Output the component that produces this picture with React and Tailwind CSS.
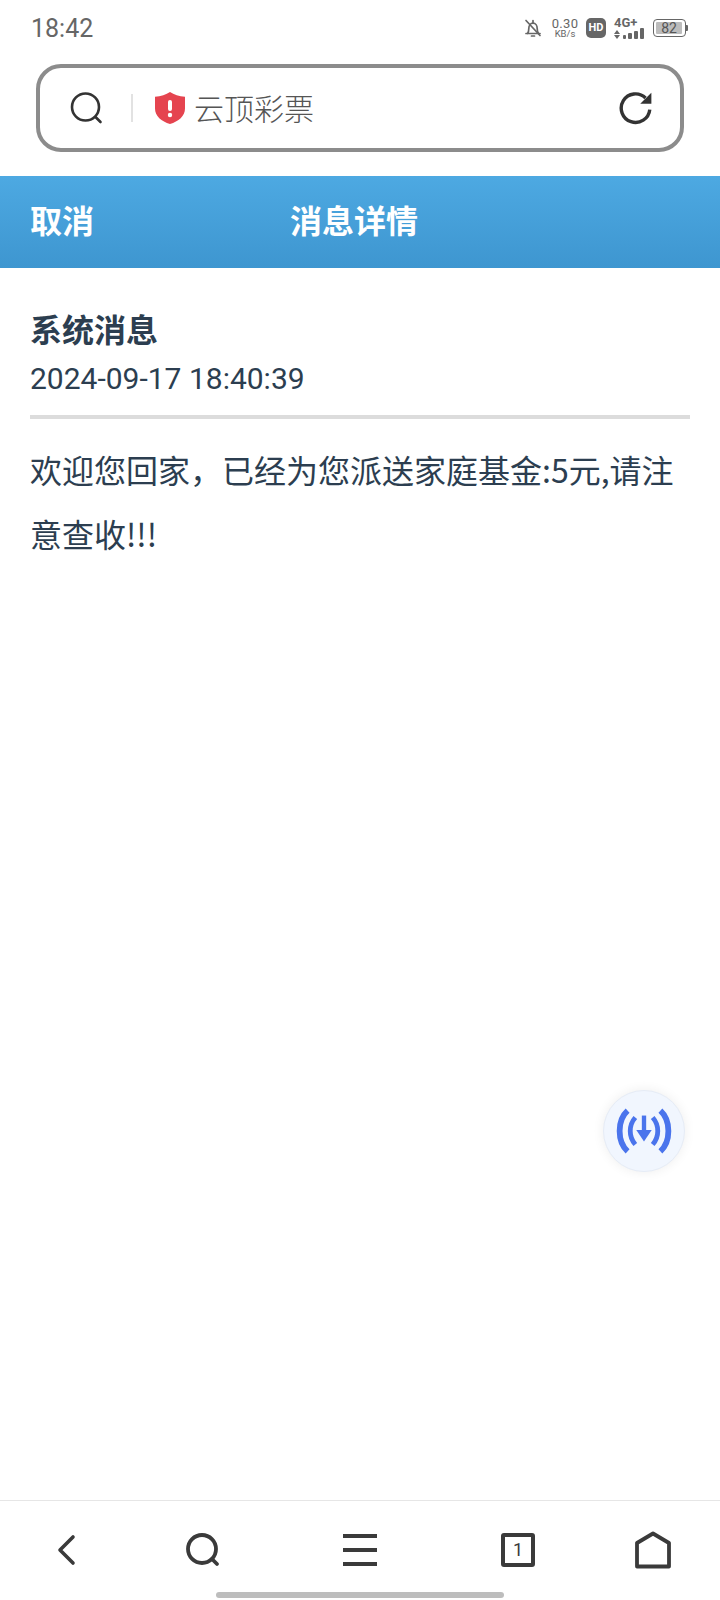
const cjk = { fontFamily: '"Noto Sans CJK SC", Roboto, sans-serif' };

function BellOff() {
  return (
    <svg width="20" height="20" viewBox="0 0 20 20" fill="none" stroke="#666" strokeWidth="1.7" strokeLinecap="round">
      <path d="M3 15.500h14M4.500 15.500c1.200-1.400 1.300-3 1.300-5 0-3 1.700-5.300 4.200-5.300 2.500 0 4.200 2.300 4.200 5.300 0 2 .1 3.600 1.300 5" />
      <path d="M10 2.500v2M8.500 18h3M3 2.500l14 15" />
    </svg>
  );
}

function Signal() {
  return (
    <div className="flex items-end gap-[2px]">
      <div className="flex flex-col gap-[1px] mr-[1px]">
        <div className="w-0 h-0 border-x-[3px] border-x-transparent border-b-[4px] border-b-[#666]" />
        <div className="w-0 h-0 border-x-[3px] border-x-transparent border-t-[4px] border-t-[#666]" />
      </div>
      <div className="w-[3px] h-[4px] rounded-[1px] bg-[#666]" />
      <div className="w-[4px] h-[6px] rounded-[1px] bg-[#666]" />
      <div className="w-[4px] h-[8px] rounded-[1px] bg-[#666]" />
      <div className="w-[4px] h-[11px] rounded-[1px] bg-[#666]" />
    </div>
  );
}

function StatusBar() {
  return (
    <div className="h-[56px] flex items-center justify-between pl-[31px] pr-[32px] text-[#666]" style={{ fontFamily: 'Roboto, sans-serif' }}>
      <span className="text-[25px] leading-none">18:42</span>
      <div className="flex items-center">
        <BellOff />
        <div className="flex flex-col items-center ml-[9px] w-[26px] leading-none">
          <span className="text-[13px] leading-[11px] tracking-[0.3px]">0.30</span>
          <span className="text-[9.500px] leading-[9px]">KB/s</span>
        </div>
        <div className="ml-[8px] w-[20px] h-[20px] rounded-[5px] bg-[#666] text-white text-[11px] font-bold flex items-center justify-center">HD</div>
        <div className="ml-[8px] flex flex-col items-start w-[32px]">
          <span className="text-[13px] font-bold leading-[10px]">4G+</span>
          <Signal />
        </div>
        <div className="ml-[7px] flex items-center">
          <div className="w-[33px] h-[18px] rounded-[4px] border-[1.500px] border-[#666] p-[2px] flex">
            <div className="w-[26px] h-full rounded-[1px] bg-[#bcbcbc] flex items-center justify-center text-[14px] text-[#555] leading-none">82</div>
          </div>
          <div className="w-[2px] h-[6px] bg-[#666] rounded-r-[1px]" />
        </div>
      </div>
    </div>
  );
}

function SearchField() {
  return (
    <div className="mx-[36px] mt-[8px] mb-[24px] h-[88px] rounded-[25px] border-[4px] border-[#8c8c8c] flex items-center pl-[30px] pr-[26px]">
      <svg width="33" height="32" viewBox="0 0 33 32" fill="none" stroke="#333" strokeWidth="2.600" strokeLinecap="round">
        <circle cx="15.500" cy="15" r="13.500" />
        <path d="M25.500 25l5 5" />
      </svg>
      <div className="ml-[28px] w-[2px] h-[28px] bg-[#e2e2e2]" />
      <svg className="ml-[21px]" width="32" height="34" viewBox="0 0 32 34">
        <path d="M16 1c4 2.800 9 4.200 15 4.800v11.700c0 7.500-6.500 13-15 15.500C7.500 30.500 1 25 1 17.500V5.800C7 5.200 12 3.800 16 1z" fill="#e5444f" />
        <rect x="14" y="9" width="4" height="11" rx="2" fill="#fff" />
        <circle cx="16" cy="24" r="2.200" fill="#fff" />
      </svg>
      <span className="ml-[8px] text-[30px] leading-none text-[#555] pb-[2px]" style={{ ...cjk, fontWeight: 300 }}>云顶彩票</span>
      <svg className="ml-auto" width="36" height="36" viewBox="0 0 34 34" fill="none">
        <path d="M30 18.500a13.500 13.500 0 1 1-4-11" stroke="#333" strokeWidth="3.200" strokeLinecap="butt" />
        <path d="M31.500 2.500v10.500H21z" fill="#333" />
      </svg>
    </div>
  );
}

function NavIcon({ children, className }) {
  return <div className={`w-[40px] h-[40px] flex items-center justify-center ${className}`}>{children}</div>;
}

function BottomBar() {
  return (
    <div className="h-[100px] border-t-[1.500px] border-[#e6e6e6] relative">
      <div className="flex pl-[47px] pt-[29px]">
        <NavIcon className="">
          <svg width="22" height="34" viewBox="0 0 22 34" fill="none" stroke="#3a3a3a" strokeWidth="3.600" strokeLinecap="round" strokeLinejoin="round">
            <path d="M17 4L4 17l13 13" />
          </svg>
        </NavIcon>
        <NavIcon className="ml-[96px]">
          <svg width="36" height="36" viewBox="0 0 36 36" fill="none" stroke="#3a3a3a" strokeWidth="3.800" strokeLinecap="round">
            <circle cx="17" cy="17" r="14" />
            <path d="M27 27l5 5" />
          </svg>
        </NavIcon>
        <NavIcon className="ml-[117px]">
          <div className="w-[34px] flex flex-col gap-[10px]">
            <div className="h-[4px] bg-[#3a3a3a]" />
            <div className="h-[4px] bg-[#3a3a3a]" />
            <div className="h-[4px] bg-[#3a3a3a]" />
          </div>
        </NavIcon>
        <NavIcon className="ml-[118px]">
          <div className="w-[34px] h-[34px] rounded-[3px] border-[4px] border-[#3a3a3a] flex items-center justify-center text-[18px] leading-none text-[#3a3a3a]" style={{ fontFamily: 'Roboto, sans-serif' }}>1</div>
        </NavIcon>
        <NavIcon className="ml-[95px]">
          <svg width="36" height="38" viewBox="0 0 36 38" fill="none" stroke="#3a3a3a" strokeWidth="3.800" strokeLinejoin="round">
            <path d="M18 2.500L34 12v23.500H2V12z" />
          </svg>
        </NavIcon>
      </div>
      <div className="absolute bottom-[2px] left-[216px] w-[288px] h-[6px] rounded-full bg-[#bdbdbd]" />
    </div>
  );
}

function DownloadBubble() {
  return (
    <div className="absolute left-[603px] top-[1090px] w-[82px] h-[82px] rounded-full bg-[#f1f6fe] border border-[#e6ecf6] shadow-[0_0_12px_rgba(0,0,0,0.07)] flex items-center justify-center">
      <svg width="56" height="46" viewBox="0 0 58 46" fill="none" stroke="#4a74ec" strokeWidth="6">
        <path d="M12 2C1 12 1 34 12 44M46 2c11 10 11 32 0 42" />
        <path d="M20 9c-7 8-7 20 0 28M38 9c7 8 7 20 0 28" strokeWidth="5" />
        <path d="M29 7v16" strokeWidth="4.500" />
        <path d="M21 22h16l-8 12z" fill="#4a74ec" stroke="none" />
      </svg>
    </div>
  );
}

export default function App() {
  return (
    <div className="relative w-[720px] h-[1600px] bg-white flex flex-col overflow-hidden" style={cjk}>
      <StatusBar />
      <SearchField />
      <header className="h-[92px] bg-gradient-to-b from-[#4da9e2] to-[#3e96d0] flex items-center pl-[30px] pb-[6px] text-white text-[32px] font-bold leading-none">
        <span className="w-[260px]">取消</span>
        <span>消息详情</span>
      </header>
      <main className="flex-1 px-[30px] pt-[36px] text-[#2c3e50]">
        <h1 className="text-[32px] font-bold leading-[48px]">系统消息</h1>
        <p className="mt-[3px] text-[30px] leading-[48px]" style={{ fontFamily: 'Roboto, sans-serif' }}>2024-09-17 18:40:39</p>
        <div className="h-[4px] bg-[#dcdcdc] mt-[12px]" />
        <p className="mt-[18px] text-[32px] leading-[64px]">欢迎您回家，已经为您派送家庭基金:5元,请注意查收!!!</p>
      </main>
      <BottomBar />
      <DownloadBubble />
    </div>
  );
}
